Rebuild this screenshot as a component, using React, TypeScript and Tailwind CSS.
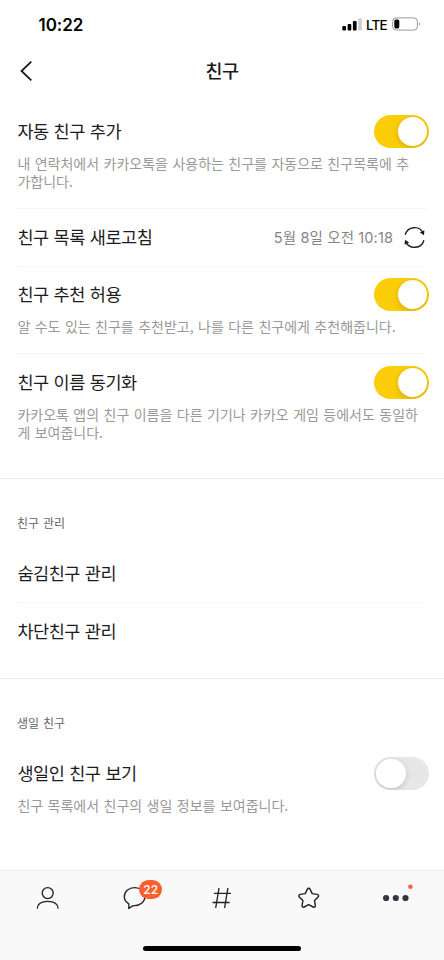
import type { ReactNode } from "react";

function Toggle({ on = false }: { on?: boolean }) {
  return (
    <button
      role="switch"
      aria-checked={on}
      className={
        on
          ? "flex h-[33px] w-[55px] shrink-0 items-center justify-end overflow-hidden rounded-full bg-[#fccd09] p-[1.5px] pr-[2px]"
          : "flex h-[33px] w-[55px] shrink-0 items-center justify-start overflow-hidden rounded-full bg-[#e7e7e9] p-[1.5px] pl-[2px]"
      }
    >
      <span className="size-[29.5px] rounded-full bg-white shadow-[0_2px_6px_rgba(0,0,0,0.16)]" />
    </button>
  );
}

function Title({ children }: { children: ReactNode }) {
  return (
    <span className="-mt-[2px] ml-[0.4px] text-[17.5px] leading-[33px] tracking-[-0.45px] whitespace-nowrap text-[#1c1c1c] [word-spacing:1.4px]">
      {children}
    </span>
  );
}

function Setting({ title, lines, on, className }: { title: string; lines: string[]; on?: boolean; className: string }) {
  return (
    <div className={className}>
      <div className="flex h-[33px] items-center justify-between">
        <Title>{title}</Title>
        <Toggle on={on} />
      </div>
      <p className="mt-[6px] mb-px ml-[0.4px] text-[14px] leading-[18px] whitespace-nowrap text-[#999] [word-spacing:1.3px]">
        {lines.map((line) => (
          <span key={line} className="block">
            {line}
          </span>
        ))}
      </p>
    </div>
  );
}

function Divider() {
  return <div className="ml-[17px] mr-[18px] h-px bg-[#f6f6f6]" />;
}

function SectionLabel({ children }: { children: ReactNode }) {
  return (
    <h2 className="px-[17px] pt-[35px] text-[12px] leading-[18px] text-[#666] [word-spacing:1.2px]">{children}</h2>
  );
}

function StatusBar() {
  return (
    <div className="flex h-12 items-center justify-between pr-[23px] pl-[38.5px] font-['Inter','Liberation_Sans',sans-serif]">
      <span className="mt-[3px] text-[17px] font-semibold tracking-[-0.05px] text-black">10:22</span>
      <div className="flex items-center">
        <svg width="20" height="13" viewBox="0 0 20 13">
          <rect x="0.3" y="8" width="3.7" height="4.5" rx="1" />
          <rect x="5.6" y="6" width="3.7" height="6.5" rx="1" />
          <rect x="10.9" y="3" width="3.7" height="9.5" rx="1" />
          <rect x="16.2" y="0.2" width="3.7" height="12.3" rx="1" fill="#cfcfcf" />
        </svg>
        <span className="mt-[2px] ml-[4px] w-[22px] text-[13.5px] leading-4 font-medium tracking-[-0.8px] text-black">LTE</span>
        <svg className="ml-[4px]" width="29" height="14" viewBox="0 0 29 14">
          <rect x="0.6" y="0.9" width="24.8" height="12.2" rx="3.7" fill="none" stroke="#999" strokeWidth="1" />
          <rect x="2.3" y="2.6" width="5" height="8.8" rx="1.6" />
          <path d="M26.8 5v4c1.3-.6 1.3-3.4 0-4Z" fill="#999" />
        </svg>
      </div>
    </div>
  );
}

function TabBar() {
  return (
    <nav className="flex h-[90px] flex-col items-center border-t border-[#ececf0] bg-[#f9f9fa]">
      <div className="flex h-[54px] w-full items-center justify-between pr-[32px] pl-[36px]">
        <svg width="24" height="24" viewBox="0 0 24 24" fill="none" stroke="#222226" strokeWidth="1.35">
          <circle cx="11.7" cy="7.1" r="5.5" />
          <path d="M1.3 22.6C1.5 17.7 5.2 15.4 11.7 15.4S21.9 17.7 22.1 22.6" />
        </svg>
        <div className="relative left-px -mr-[14px] flex w-[39px]">
          <svg width="24" height="24" viewBox="0 0 24 24" fill="none" stroke="#222226" strokeWidth="1.35" strokeLinejoin="round">
            <path d="M11.6 1.6C5.8 1.6 1.3 5.4 1.3 10.6c0 2.9 1.4 5.3 3.9 6.7.5.3.7.7.7 1.2l-.1 4 3.3-2.4c.5-.4 1-.5 1.7-.5h.8c5.8 0 10.3-3.8 10.3-9S17.4 1.6 11.6 1.6Z" />
          </svg>
          <span className="absolute -top-[6px] left-[16px] flex h-[19px] w-[23px] items-center justify-center rounded-full bg-[#fb5f2d] font-['Inter','Liberation_Sans',sans-serif] text-[12px] font-medium text-white">
            22
          </span>
        </div>
        <svg width="24" height="24" viewBox="0 0 24 24" fill="none" stroke="#222226" strokeWidth="1.35">
          <path d="M9 2 5.7 22M17.9 2l-3.3 20M3.9 7.3h17M2.6 16.5h17" />
        </svg>
        <svg className="relative left-px" width="24" height="24" viewBox="0 0 24 24" fill="none" stroke="#222226" strokeWidth="1.45" strokeLinejoin="round">
          <path d="M10.4 3.1c.6-1.2 2-1.2 2.6 0l2.2 4.5 5 .8c1.4.2 1.8 1.6.9 2.5l-3.6 3.6.8 5c.2 1.4-.9 2.1-2.1 1.5l-4.5-2.3L7.2 21c-1.2.6-2.3-.1-2.1-1.5l.8-5-3.6-3.6c-.9-.9-.5-2.3.9-2.5l5-.8Z" />
        </svg>
        <svg className="overflow-visible" width="30" height="28" viewBox="0 0 30 28" fill="#35353f">
          <circle cx="4.1" cy="14" r="3.1" />
          <circle cx="13.8" cy="14" r="3.1" />
          <circle cx="23.5" cy="14" r="3.1" />
          <circle cx="28.4" cy="2.8" r="2.3" fill="#fb5f3d" />
        </svg>
      </div>
      <div className="mt-[20.5px] h-[5.5px] w-[158px] rounded-full bg-black" />
    </nav>
  );
}

export default function App() {
  return (
    <main className="flex h-[960px] w-[444px] flex-col overflow-hidden bg-white font-['Noto_Sans_CJK_KR',sans-serif]">
      <StatusBar />
      <header className="grid h-[46px] grid-cols-[1fr_auto_1fr] items-center px-[18px]">
        <svg width="16" height="22" viewBox="0 0 16 22" fill="none" stroke="#1b1b1b" strokeWidth="1.8">
          <path d="M13.3 1.7 3.5 11l9.8 9.3" />
        </svg>
        <h1 className="-mt-[2px] text-[18.5px] leading-6 font-medium tracking-[-0.4px] text-[#1b1b1b]">친구</h1>
      </header>

      <section>
        <Setting
          className="pt-[21px] pr-[15px] pb-[17px] pl-[17px]"
          title="자동 친구 추가"
          lines={["내 연락처에서 카카오톡을 사용하는 친구를 자동으로 친구목록에 추", "가합니다."]}
          on
        />
        <Divider />
        <div className="flex h-[57px] items-center pr-[18px] pl-[17px]">
          <Title>친구 목록 새로고침</Title>
          <span className="ml-auto font-['Inter','Noto_Sans_CJK_KR',sans-serif] text-[14.5px] tracking-[0.12px] text-[#858585]">
            5월 8일 오전 10:18
          </span>
          <svg className="ml-[10px]" width="23" height="23" viewBox="0 0 23 23" fill="none" stroke="#1b1b1b" strokeWidth="1.35">
            <path d="M2.1 8.8a9.7 9.7 0 0 1 18.2-1.4M20.9 14.2a9.7 9.7 0 0 1-18.2 1.4" />
            <path d="m21.4 4.2-.4 5-4.2-2.6ZM1.6 18.8l.4-5 4.2 2.6Z" fill="#1b1b1b" stroke="none" />
          </svg>
        </div>
        <Divider />
        <Setting
          className="pt-[11px] pr-[15px] pb-[17px] pl-[17px]"
          title="친구 추천 허용"
          lines={["알 수도 있는 친구를 추천받고, 나를 다른 친구에게 추천해줍니다."]}
          on
        />
        <Divider />
        <Setting
          className="pt-[12px] pr-[15px] pb-[36px] pl-[17px]"
          title="친구 이름 동기화"
          lines={["카카오톡 앱의 친구 이름을 다른 기기나 카카오 게임 등에서도 동일하", "게 보여줍니다."]}
          on
        />
      </section>

      <section className="h-[200px] border-t border-[#ececec]">
        <SectionLabel>친구 관리</SectionLabel>
        <div className="mt-[13px] flex h-[57px] items-center px-[17px]">
          <Title>숨김친구 관리</Title>
        </div>
        <Divider />
        <div className="flex h-[57px] items-center px-[17px]">
          <Title>차단친구 관리</Title>
        </div>
      </section>

      <section className="flex-1 border-t border-[#ececec]">
        <SectionLabel>생일 친구</SectionLabel>
        <Setting
          className="pt-[25px] pr-[15px] pl-[17px]"
          title="생일인 친구 보기"
          lines={["친구 목록에서 친구의 생일 정보를 보여줍니다."]}
        />
      </section>

      <TabBar />
    </main>
  );
}
